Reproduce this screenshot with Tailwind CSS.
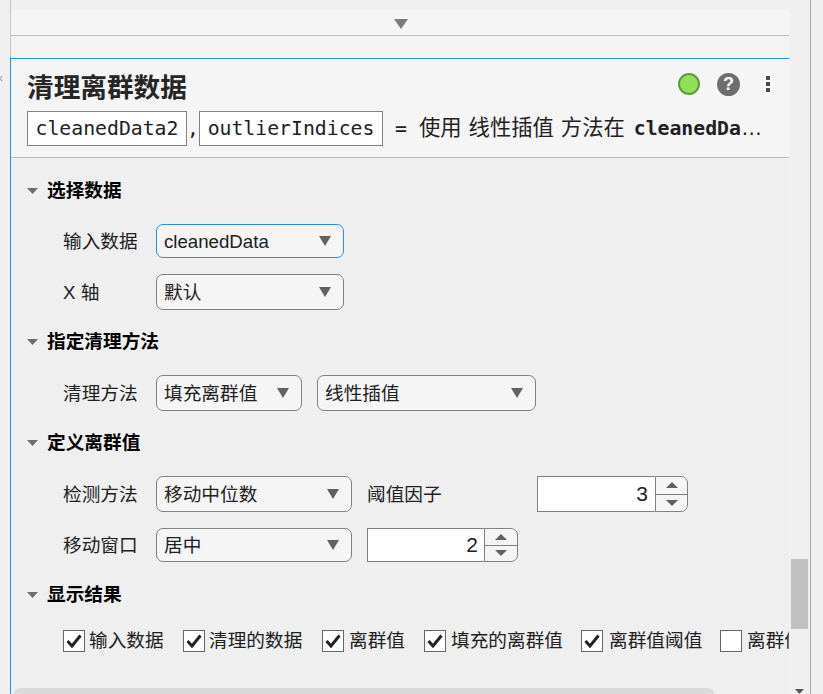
<!DOCTYPE html>
<html lang="zh-CN">
<head>
  <meta charset="UTF-8" />
  <title>清理离群数据</title>
  <script src="https://cdn.jsdelivr.net/npm/@tailwindcss/browser@4"></script>
</head>
<body class="bg-[#f0f0f0] text-[#212121] font-['Liberation_Sans','Noto_Sans_CJK_SC',sans-serif]">
  <div class="relative flex h-[694px] w-[823px] overflow-hidden">
    <!-- left edge -->
    <div class="w-[10px] shrink-0 pt-[76px]">
      <svg width="3" height="5" viewBox="0 0 3 5"><path d="M2 0 L0 2.5 L2 5" fill="none" stroke="#8a8a8a"/></svg>
    </div>

    <main class="relative flex h-[694px] w-[779px] shrink-0 flex-col overflow-hidden">
      <!-- collapsed cell above -->
      <div class="h-[58px] shrink-0 border-l border-[#c4c4c4]">
        <div class="h-[10px]"></div>
        <div class="flex h-[26px] justify-center border-b border-[#bdbdbd] bg-[#f5f5f5] pl-[2px] pt-[9px]">
          <svg width="14" height="10" viewBox="0 0 14 10"><polygon points="0,0 14,0 7,10" fill="#7a7a7a"/></svg>
        </div>
        <div class="h-[22px] bg-[#f3f3f3]"></div>
      </div>

      <!-- live task -->
      <div class="flex min-h-0 flex-1 flex-col border-l border-t border-[#2b8fe6]">
        <header class="h-[99px] shrink-0 border-b border-[#bdbdbd] bg-[#f5f5f5] pl-[16px]">
          <div class="flex h-[52px] items-center justify-between pr-[19px]">
            <h1 class="text-[26.67px] leading-[36px] font-bold text-[#262626] mt-[6px]">清理离群数据</h1>
            <div class="flex items-center mt-[-2px]">
              <span class="h-[22px] w-[22px] rounded-full border-2 border-[#5f9a40] bg-[#8fdf5a]"></span>
              <span class="ml-[17px] flex h-[23px] w-[23px] items-center justify-center rounded-full bg-[#6e6e6e] text-[18px] leading-none font-bold text-white">?</span>
              <span class="ml-[26px] flex w-[4px] flex-col gap-[2px]">
                <i class="h-[4px] w-[4px] bg-[#4a4a4a]"></i>
                <i class="h-[4px] w-[4px] bg-[#4a4a4a]"></i>
                <i class="h-[4px] w-[4px] bg-[#4a4a4a]"></i>
              </span>
            </div>
          </div>
          <div class="flex h-[35px] items-center whitespace-nowrap">
            <span class="flex h-[35px] w-[160px] items-center justify-center border border-[#808080] bg-white font-['DejaVu_Sans_Mono',monospace] text-[19.8px]">cleanedData2</span>
            <span class="w-[12px] text-center font-['DejaVu_Sans_Mono',monospace] text-[19.8px]">,</span>
            <span class="flex h-[35px] w-[184px] items-center justify-center border border-[#808080] bg-white font-['DejaVu_Sans_Mono',monospace] text-[19.8px]">outlierIndices</span>
            <span class="ml-[12px] w-[12px] text-center font-['DejaVu_Sans_Mono',monospace] text-[19.8px]">=</span>
            <span class="ml-[12px] w-[346px] overflow-hidden text-[21.33px] text-ellipsis [word-spacing:1px]">使用 线性插值 方法在 <b class="ml-[2px] font-['DejaVu_Sans_Mono',monospace] text-[19.8px] font-bold">cleanedData</b> 中填充离群值</span>
          </div>
        </header>

        <form class="flex-1 bg-[#efefef] pl-[16px]">
          <!-- select data -->
          <h2 class="mt-[19px] flex h-[28px] items-center gap-[9px] text-[18.67px] font-bold text-black">
            <svg width="11" height="6" viewBox="0 0 11 6"><polygon points="0,0 11,0 5.5,6" fill="#6e6e6e"/></svg>选择数据
          </h2>
          <div class="mt-[19px] flex h-[34px] items-center pl-[36px] text-[18.67px]">
            <label class="w-[93px] pt-[2px]">输入数据</label>
            <div class="flex h-[34px] w-[188px] items-center justify-between rounded-[7px] border border-[#2b8fe6] bg-[#f5f5f5] pl-[7px] pr-[12px]"><span class="pt-[2px]">cleanedData</span>
              <svg width="12" height="10" viewBox="0 0 12 10"><polygon points="0,0 12,0 6,10" fill="#616161"/></svg>
            </div>
          </div>
          <div class="mt-[16px] flex h-[36px] items-center pl-[36px] text-[18.67px]">
            <label class="w-[93px] pt-[2px]">X 轴</label>
            <div class="flex h-[36px] w-[188px] items-center justify-between rounded-[7px] border border-[#808080] bg-[#f5f5f5] pl-[7px] pr-[12px]"><span class="pt-[2px]">默认</span>
              <svg width="12" height="10" viewBox="0 0 12 10"><polygon points="0,0 12,0 6,10" fill="#616161"/></svg>
            </div>
          </div>

          <!-- cleaning method -->
          <h2 class="mt-[18px] flex h-[28px] items-center gap-[9px] text-[18.67px] font-bold text-black">
            <svg width="11" height="6" viewBox="0 0 11 6"><polygon points="0,0 11,0 5.5,6" fill="#6e6e6e"/></svg>指定清理方法
          </h2>
          <div class="mt-[19px] flex h-[36px] items-center pl-[36px] text-[18.67px]">
            <label class="w-[93px] pt-[2px]">清理方法</label>
            <div class="flex h-[36px] w-[146px] items-center justify-between rounded-[7px] border border-[#808080] bg-[#f5f5f5] pl-[7px] pr-[12px]"><span class="pt-[2px]">填充离群值</span>
              <svg width="12" height="10" viewBox="0 0 12 10"><polygon points="0,0 12,0 6,10" fill="#616161"/></svg>
            </div>
            <div class="ml-[15px] flex h-[36px] w-[219px] items-center justify-between rounded-[7px] border border-[#808080] bg-[#f5f5f5] pl-[7px] pr-[12px]"><span class="pt-[2px]">线性插值</span>
              <svg width="12" height="10" viewBox="0 0 12 10"><polygon points="0,0 12,0 6,10" fill="#616161"/></svg>
            </div>
          </div>

          <!-- define outliers -->
          <h2 class="mt-[18px] flex h-[28px] items-center gap-[9px] text-[18.67px] font-bold text-black">
            <svg width="11" height="6" viewBox="0 0 11 6"><polygon points="0,0 11,0 5.5,6" fill="#6e6e6e"/></svg>定义离群值
          </h2>
          <div class="mt-[19px] flex h-[36px] items-center pl-[36px] text-[18.67px]">
            <label class="w-[93px] pt-[2px]">检测方法</label>
            <div class="flex h-[36px] w-[196px] items-center justify-between rounded-[7px] border border-[#808080] bg-[#f5f5f5] pl-[7px] pr-[12px]"><span class="pt-[2px]">移动中位数</span>
              <svg width="12" height="10" viewBox="0 0 12 10"><polygon points="0,0 12,0 6,10" fill="#616161"/></svg>
            </div>
            <label class="ml-[15px] w-[170px] pt-[2px]">阈值因子</label>
            <div class="flex h-[36px] w-[151px]">
              <div class="flex w-[118px] items-center justify-end border border-r-0 border-[#808080] bg-white pr-[7px] text-[21px]">3</div>
              <div class="flex w-[33px] flex-col rounded-r-[7px] border border-[#808080] bg-[#f5f5f5]">
                <div class="flex flex-1 items-center justify-center border-b border-[#808080]"><svg width="12" height="6" viewBox="0 0 12 6"><polygon points="0,6 12,6 6,0" fill="#616161"/></svg></div>
                <div class="flex flex-1 items-center justify-center"><svg width="12" height="6" viewBox="0 0 12 6"><polygon points="0,0 12,0 6,6" fill="#616161"/></svg></div>
              </div>
            </div>
          </div>
          <div class="mt-[16px] flex h-[34px] items-center pl-[36px] text-[18.67px]">
            <label class="w-[93px] pt-[2px]">移动窗口</label>
            <div class="flex h-[34px] w-[196px] items-center justify-between rounded-[7px] border border-[#808080] bg-[#f5f5f5] pl-[7px] pr-[12px]"><span class="pt-[2px]">居中</span>
              <svg width="12" height="10" viewBox="0 0 12 10"><polygon points="0,0 12,0 6,10" fill="#616161"/></svg>
            </div>
            <div class="ml-[15px] flex h-[34px] w-[151px]">
              <div class="flex w-[117px] items-center justify-end border border-r-0 border-[#808080] bg-white pr-[6px] text-[21px]">2</div>
              <div class="flex w-[34px] flex-col rounded-r-[7px] border border-[#808080] bg-[#f5f5f5]">
                <div class="flex flex-1 items-center justify-center border-b border-[#808080]"><svg width="12" height="6" viewBox="0 0 12 6"><polygon points="0,6 12,6 6,0" fill="#616161"/></svg></div>
                <div class="flex flex-1 items-center justify-center"><svg width="12" height="6" viewBox="0 0 12 6"><polygon points="0,0 12,0 6,6" fill="#616161"/></svg></div>
              </div>
            </div>
          </div>

          <!-- display results -->
          <h2 class="mt-[19px] flex h-[28px] items-center gap-[9px] text-[18.67px] font-bold text-black">
            <svg width="11" height="6" viewBox="0 0 11 6"><polygon points="0,0 11,0 5.5,6" fill="#6e6e6e"/></svg>显示结果
          </h2>
          <div class="mt-[21px] flex h-[22px] items-center whitespace-nowrap pl-[36px] text-[18.67px]">
            <span class="flex h-[22px] w-[22px] shrink-0 items-center justify-center border border-[#666] bg-white"><svg width="16" height="14" viewBox="0 0 16 14"><path d="M1.5 7 L6 12 L14.5 1.5" fill="none" stroke="#222" stroke-width="3"/></svg></span>
            <span class="ml-[4px] w-[94px] shrink-0">输入数据</span>
            <span class="flex h-[22px] w-[22px] shrink-0 items-center justify-center border border-[#666] bg-white"><svg width="16" height="14" viewBox="0 0 16 14"><path d="M1.5 7 L6 12 L14.5 1.5" fill="none" stroke="#222" stroke-width="3"/></svg></span>
            <span class="ml-[4px] w-[113px] shrink-0">清理的数据</span>
            <span class="flex h-[22px] w-[22px] shrink-0 items-center justify-center border border-[#666] bg-white"><svg width="16" height="14" viewBox="0 0 16 14"><path d="M1.5 7 L6 12 L14.5 1.5" fill="none" stroke="#222" stroke-width="3"/></svg></span>
            <span class="ml-[5px] w-[75px] shrink-0">离群值</span>
            <span class="flex h-[22px] w-[22px] shrink-0 items-center justify-center border border-[#666] bg-white"><svg width="16" height="14" viewBox="0 0 16 14"><path d="M1.5 7 L6 12 L14.5 1.5" fill="none" stroke="#222" stroke-width="3"/></svg></span>
            <span class="ml-[5px] w-[130px] shrink-0">填充的离群值</span>
            <span class="flex h-[22px] w-[22px] shrink-0 items-center justify-center border border-[#666] bg-white"><svg width="16" height="14" viewBox="0 0 16 14"><path d="M1.5 7 L6 12 L14.5 1.5" fill="none" stroke="#222" stroke-width="3"/></svg></span>
            <span class="ml-[6px] w-[111px] shrink-0">离群值阈值</span>
            <span class="h-[22px] w-[22px] shrink-0 border border-[#666] bg-white"></span>
            <span class="ml-[5px] shrink-0">离群值</span>
          </div>
        </form>
      </div>

      <!-- horizontal scrollbar overlay -->
      <div class="absolute bottom-0 left-[4px] h-[6px] w-[700px] rounded-t-[6px] bg-[#d9d9d9]"></div>
    </main>

    <!-- vertical scrollbar -->
    <aside class="relative w-[22px] shrink-0 border-r border-[#a9a9a9]">
      <div class="ml-[2px] mt-[559px] h-[70px] w-[17px] bg-[#c0c0c0]"></div>
      <svg class="absolute bottom-0 left-[6px]" width="9" height="5" viewBox="0 0 9 5"><polygon points="0,0 9,0 4.5,5" fill="#555"/></svg>
    </aside>
  </div>
</body>
</html>
